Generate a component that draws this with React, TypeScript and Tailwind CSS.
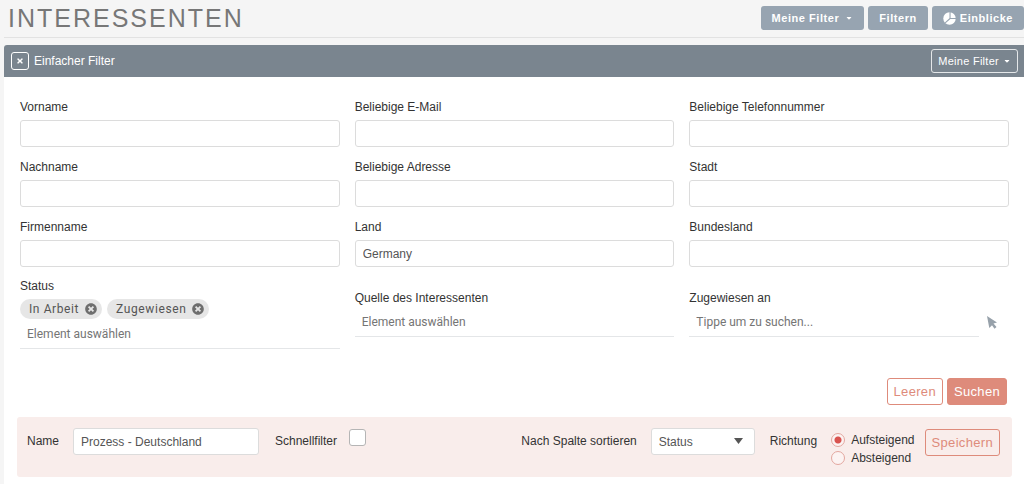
import { useState } from "react";
import type { ReactNode } from "react";
import { FaCaretDown, FaTimes, FaTimesCircle } from "react-icons/fa";

const textFields = [
  { id: "firstName", label: "Vorname", value: "" },
  { id: "email", label: "Beliebige E-Mail", value: "" },
  { id: "phone", label: "Beliebige Telefonnummer", value: "" },
  { id: "lastName", label: "Nachname", value: "" },
  { id: "address", label: "Beliebige Adresse", value: "" },
  { id: "city", label: "Stadt", value: "" },
  { id: "company", label: "Firmenname", value: "" },
  { id: "country", label: "Land", value: "Germany" },
  { id: "state", label: "Bundesland", value: "" },
];

function PieIcon() {
  return (
    <svg viewBox="0 0 24 24" className="mr-1 size-[13px]" aria-hidden="true">
      <circle cx="12" cy="12" r="11.500" fill="white" />
      <path d="M13 0v12h11M13 12L4 20" fill="none" stroke="#97a4b1" strokeWidth="2" />
    </svg>
  );
}

function CursorIcon() {
  return (
    <svg viewBox="0 0 10 13" className="h-[13px] w-2.5 fill-[#97a1aa]" aria-hidden="true">
      <path d="M0 0L10 6.500L6.500 7.500L9.500 11L7.500 12.800L5 9.300L2.300 12z" />
    </svg>
  );
}

function TextField({ id, label, value }: { id: string; label: string; value: string }) {
  return (
    <div className="flex flex-col gap-1">
      <label htmlFor={id} className="leading-[18px]">
        {label}
      </label>
      <input
        id={id}
        type="text"
        defaultValue={value}
        className="h-[27px] w-full rounded-[3px] border border-[#dcdcdc] bg-white px-[7px] text-[#555]"
      />
    </div>
  );
}

function PickerField({
  id,
  label,
  placeholder,
  children,
}: {
  id: string;
  label: string;
  placeholder: string;
  children?: ReactNode;
}) {
  return (
    <div className="flex min-w-0 flex-1 flex-col">
      <label htmlFor={id} className="leading-[18px]">
        {label}
      </label>
      {children}
      <input
        id={id}
        type="text"
        placeholder={placeholder}
        className="h-[30px] w-full border-b border-[#e4e6e8] bg-transparent px-[7px] font-['Roboto',sans-serif] placeholder:text-[#757575]"
      />
    </div>
  );
}

function HeaderButton({ children }: { children: ReactNode }) {
  return (
    <button
      type="button"
      className="flex h-6 items-center rounded-[3px] bg-[#97a4b1] px-[11px] text-[11px] font-bold tracking-wider text-white"
    >
      {children}
    </button>
  );
}

export default function App() {
  const [statuses, setStatuses] = useState(["In Arbeit", "Zugewiesen"]);
  const [direction, setDirection] = useState("Aufsteigend");

  return (
    <div className="min-h-screen bg-[#f5f5f5] pl-1 font-['Liberation_Sans',Arial,sans-serif] text-xs text-[#333]">
      {/* Page header */}
      <header className="flex h-[38px] items-center justify-between border-b border-[#e2e2e2] pb-px pl-1">
        <h1 className="text-[25px] leading-9 tracking-[2px] text-[#777]">INTERESSENTEN</h1>
        <div className="flex gap-1">
          <HeaderButton>
            Meine Filter
            <FaCaretDown className="ml-1.5 size-2" />
          </HeaderButton>
          <HeaderButton>Filtern</HeaderButton>
          <HeaderButton>
            <PieIcon />
            Einblicke
          </HeaderButton>
        </div>
      </header>

      <main className="mt-[7px] min-h-[439px] overflow-hidden rounded-tl-[3px] bg-white">
        {/* Filter bar */}
        <div className="flex h-8 items-center bg-[#7a858f] pr-1.5 pl-[7px] text-white">
          <button
            type="button"
            aria-label="Filter schließen"
            className="flex size-[18px] items-center justify-center rounded-[3px] border border-white"
          >
            <FaTimes className="size-2" />
          </button>
          <h2 className="ml-[5px] flex-1">Einfacher Filter</h2>
          <button
            type="button"
            className="flex h-6 items-center rounded-[3px] border border-[#e4e7e9] px-1.5 text-[11px] tracking-wide"
          >
            Meine Filter
            <FaCaretDown className="ml-1 size-2" />
          </button>
        </div>

        <form onSubmit={(e) => e.preventDefault()} className="pt-[21px]">
          <div className="grid grid-cols-3 gap-x-[15px] gap-y-[11px] pr-[15px] pl-4">
            {textFields.map((field) => (
              <TextField key={field.id} {...field} />
            ))}
          </div>

          <div className="mt-2.5 grid grid-cols-3 items-center gap-x-[15px] pr-[15px] pl-4">
            <PickerField id="status" label="Status" placeholder="Element auswählen">
              <div className="mt-1 flex gap-[5px]">
                {statuses.map((status) => (
                  <span
                    key={status}
                    className="flex h-5 items-center gap-1.5 rounded-full bg-[#e6e6e6] pr-[5px] pl-[9px] font-['Roboto',sans-serif] tracking-wider text-[#555]"
                  >
                    {status}
                    <button
                      type="button"
                      aria-label={`${status} entfernen`}
                      onClick={() => setStatuses(statuses.filter((s) => s !== status))}
                    >
                      <FaTimesCircle className="size-3 text-[#6e6e6e]" />
                    </button>
                  </span>
                ))}
              </div>
            </PickerField>
            <PickerField
              id="source"
              label="Quelle des Interessenten"
              placeholder="Element auswählen"
            />
            <div className="flex items-end">
              <PickerField id="assigned" label="Zugewiesen an" placeholder="Tippe um zu suchen..." />
              <button type="button" aria-label="Auswählen" className="mb-2 ml-2 pr-3">
                <CursorIcon />
              </button>
            </div>
          </div>

          <div className="mt-[29px] flex justify-end gap-1 pr-[17px]">
            <button
              type="reset"
              className="h-[27px] rounded-[3px] border border-[#de8b7b] px-1.5 text-[13px] tracking-wide text-[#de8b7b]"
            >
              Leeren
            </button>
            <button
              type="submit"
              className="h-[27px] rounded-[3px] border border-[#de8b7b] bg-[#de8b7b] px-1.5 text-[13px] tracking-wide text-white"
            >
              Suchen
            </button>
          </div>
        </form>

        {/* Save filter */}
        <form
          onSubmit={(e) => e.preventDefault()}
          className="mt-3 mr-3 ml-[13px] flex h-[60px] items-start rounded-[3px] bg-[#f9edeb] pt-[11px] pr-3 pl-2.5"
        >
          <label htmlFor="filterName" className="leading-[27px]">
            Name
          </label>
          <input
            id="filterName"
            type="text"
            defaultValue="Prozess - Deutschland"
            className="ml-3.5 h-[27px] w-[186px] rounded-[3px] border border-[#dcdcdc] bg-white px-[7px] text-[#555]"
          />
          <label htmlFor="quickFilter" className="ml-4 leading-[27px]">
            Schnellfilter
          </label>
          <input
            id="quickFilter"
            type="checkbox"
            className="mt-px ml-3 size-[17px] appearance-none rounded-[3px] border border-[#b5b5b5] bg-white checked:bg-[#de8b7b]"
          />

          <label htmlFor="sortColumn" className="ml-auto leading-[27px]">
            Nach Spalte sortieren
          </label>
          <div className="relative ml-3.5">
            <select
              id="sortColumn"
              defaultValue="Status"
              className="h-[27px] w-[104px] appearance-none rounded-[3px] border border-[#dcdcdc] bg-white px-[7px] text-[#555]"
            >
              <option>Status</option>
              <option>Name</option>
            </select>
            <svg
              viewBox="0 0 9 6"
              className="pointer-events-none absolute top-2.5 right-3 h-1.5 w-[9px] fill-[#555]"
            >
              <path d="M0 0h9L4.500 6z" />
            </svg>
          </div>
          <span id="directionLabel" className="ml-[15px] leading-[27px]">
            Richtung
          </span>
          <div
            role="radiogroup"
            aria-labelledby="directionLabel"
            className="ml-3.5 flex flex-col gap-1 pt-[5px]"
          >
            {["Aufsteigend", "Absteigend"].map((option) => (
              <label key={option} className="flex h-3.5 items-center gap-1.5">
                <input
                  type="radio"
                  name="direction"
                  checked={direction === option}
                  onChange={() => setDirection(option)}
                  className="size-3.5 appearance-none rounded-full border border-[#e3a79f] bg-[#fcf3f2] checked:bg-[radial-gradient(circle,#d9534f_3px,#fcf3f2_4px)]"
                />
                {option}
              </label>
            ))}
          </div>
          <button
            type="submit"
            className="mt-px ml-2.5 h-[27px] rounded-[3px] border border-[#de8b7b] px-1.5 text-[13px] tracking-wide text-[#de8b7b]"
          >
            Speichern
          </button>
        </form>
      </main>
    </div>
  );
}
